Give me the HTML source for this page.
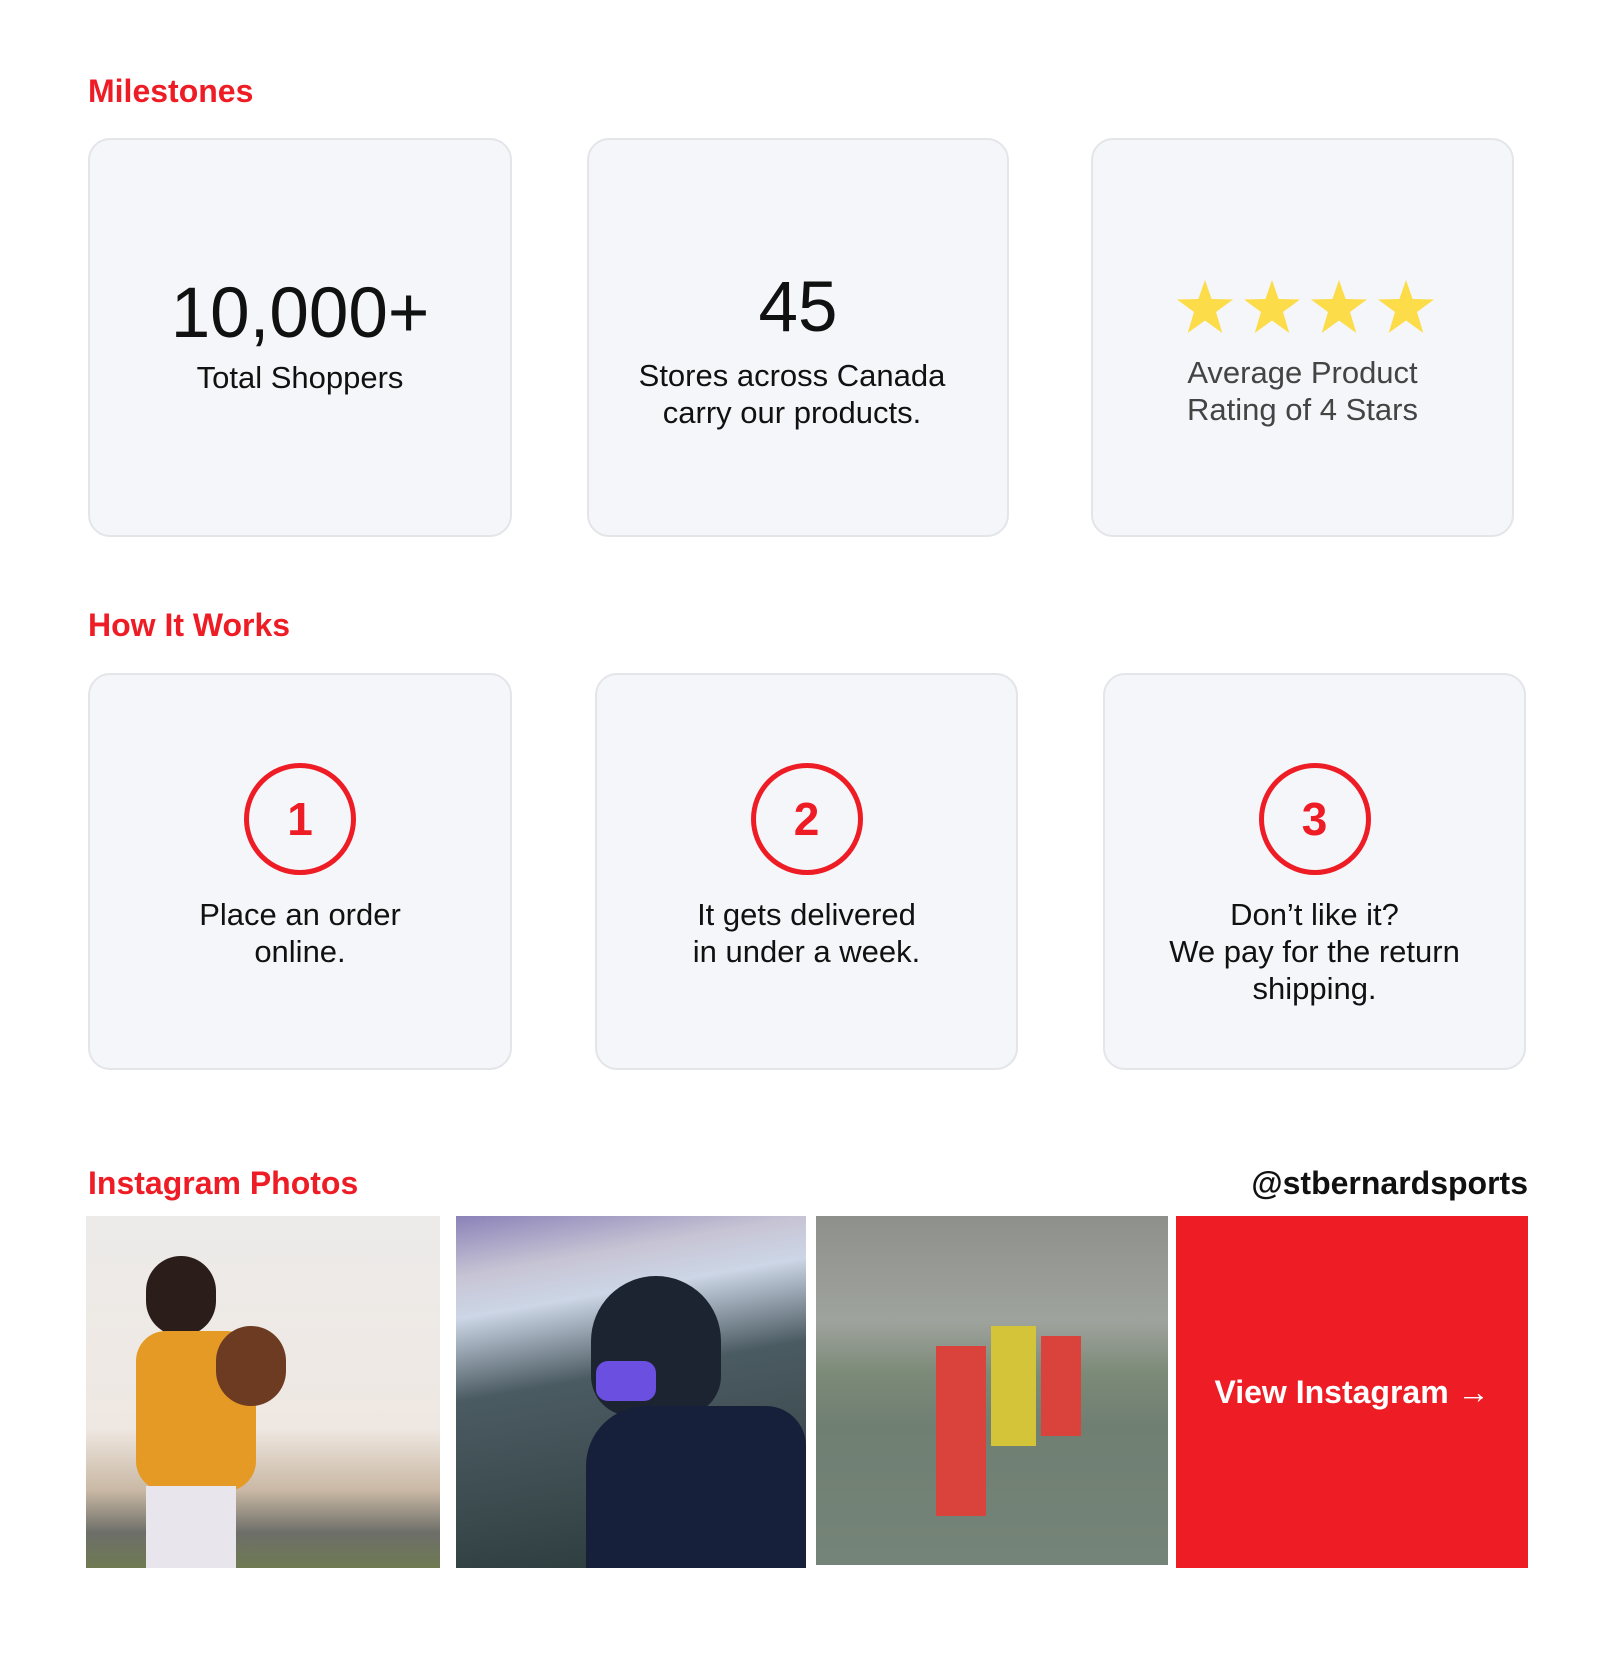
<!DOCTYPE html>
<html><head><meta charset="utf-8"><style>
*{margin:0;padding:0;box-sizing:border-box}
body{width:1612px;height:1662px;background:#fff;font-family:"Liberation Sans",Arial,sans-serif;position:relative;overflow:hidden;color:#111}
.h{position:absolute;color:#ee1c24;font-weight:bold;font-size:32px;line-height:36px}
.card{position:absolute;background:#f5f6f9;border:2px solid #e4e5e9;border-radius:22px}
.t{position:absolute;left:0;right:0;text-align:center;font-size:31px;line-height:37px}
.circ{position:absolute;width:112px;height:112px;border:5px solid #ee1c24;border-radius:50%;color:#ee1c24;font-weight:bold;font-size:46px;display:flex;align-items:center;justify-content:center;left:50%;margin-left:-56px;top:88px}
.img{position:absolute;top:1216px;height:352px;overflow:hidden}
</style></head><body>
<div class="h" style="left:88px;top:73px">Milestones</div>

<div class="card" style="left:88px;top:138px;width:424px;height:399px">
 <div class="t" style="top:134px;font-size:71px;line-height:80px">10,000+</div>
 <div class="t" style="top:219px">Total Shoppers</div>
</div>
<div class="card" style="left:587px;top:138px;width:422px;height:399px">
 <div class="t" style="top:128px;font-size:71px;line-height:80px">45</div>
 <div class="t" style="top:217px;right:12px">Stores across Canada<br>carry our products.</div>
</div>
<div class="card" style="left:1091px;top:138px;width:423px;height:399px">
 <svg style="position:absolute;left:84px;top:140px" width="258" height="56" viewBox="0 0 258 56">
  <g fill="#fcdc48">
   <polygon id="s" points="28,0 34.6,19 56,19.5 39,32 45.3,53 28,40.5 10.7,53 17,32 0,19.5 21.4,19"/>
   <use href="#s" x="67"/><use href="#s" x="134"/><use href="#s" x="201"/>
  </g>
 </svg>
 <div class="t" style="top:214px;color:#444">Average Product<br>Rating of 4 Stars</div>
</div>

<div class="h" style="left:88px;top:607px">How It Works</div>

<div class="card" style="left:88px;top:673px;width:424px;height:397px">
 <div class="circ">1</div>
 <div class="t" style="top:221px">Place an order<br>online.</div>
</div>
<div class="card" style="left:595px;top:673px;width:423px;height:397px">
 <div class="circ">2</div>
 <div class="t" style="top:221px">It gets delivered<br>in under a week.</div>
</div>
<div class="card" style="left:1103px;top:673px;width:423px;height:397px">
 <div class="circ">3</div>
 <div class="t" style="top:221px">Don’t like it?<br>We pay for the return<br>shipping.</div>
</div>

<div class="h" style="left:88px;top:1165px">Instagram Photos</div>
<div class="h" style="right:84px;top:1165px;color:#111">@stbernardsports</div>

<div class="img" style="left:86px;width:354px;background:linear-gradient(180deg,#ecebea 0%,#efe8e2 60%,#c9b8a4 78%,#6d6e69 90%,#6f7a52 100%)">
 <div style="position:absolute;left:60px;top:40px;width:70px;height:80px;border-radius:40px;background:#2a1d1a"></div>
 <div style="position:absolute;left:50px;top:115px;width:120px;height:160px;border-radius:30px;background:#e49a25"></div>
 <div style="position:absolute;left:130px;top:110px;width:70px;height:80px;border-radius:35px;background:#6d3a22"></div>
 <div style="position:absolute;left:60px;top:270px;width:90px;height:90px;background:#e8e6ec"></div>
</div>
<div class="img" style="left:456px;width:350px;background:linear-gradient(170deg,#8b82b8 0%,#c7c4d4 15%,#ccd6e6 25%,#4b5b62 45%,#2a3a3a 100%)">
 <div style="position:absolute;left:135px;top:60px;width:130px;height:140px;border-radius:65px 65px 40px 40px;background:#1c2431"></div>
 <div style="position:absolute;left:140px;top:145px;width:60px;height:40px;border-radius:12px;background:#6a4fe0"></div>
 <div style="position:absolute;left:130px;top:190px;width:220px;height:170px;border-radius:60px 40px 0 0;background:#16203a"></div>
</div>
<div class="img" style="left:816px;width:352px;height:349px;background:linear-gradient(180deg,#8e908c 0%,#9fa39d 30%,#7c8a78 45%,#6f7f72 60%,#758478 100%)">
 <div style="position:absolute;left:120px;top:130px;width:50px;height:170px;background:#d9433c"></div>
 <div style="position:absolute;left:175px;top:110px;width:45px;height:120px;background:#d4c43a"></div>
 <div style="position:absolute;left:225px;top:120px;width:40px;height:100px;background:#d9433c"></div>
</div>
<div style="position:absolute;left:1176px;top:1216px;width:352px;height:352px;background:#ee1c24;color:#fff;font-weight:bold;font-size:32px;display:flex;align-items:center;justify-content:center">View Instagram →</div>
</body></html>
